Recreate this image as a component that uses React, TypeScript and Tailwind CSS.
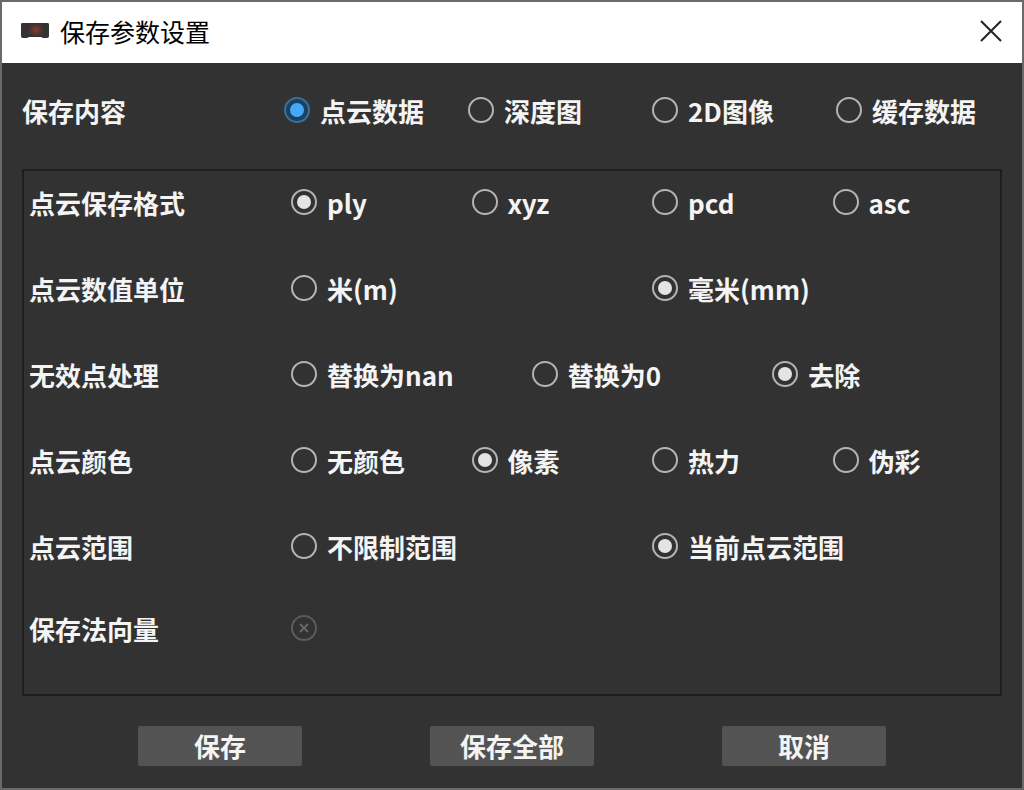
import { useState } from "react";

type Option = { label: string; accent?: boolean };

type Setting = { name: string; title: string; options: string[]; initial: number; columns: string };

const contents: string[] = ["点云数据", "深度图", "2D图像", "缓存数据"];

const settings: Setting[] = [
  { name: "format", title: "点云保存格式", options: ["ply", "xyz", "pcd", "asc"], initial: 0, columns: "grid-cols-4" },
  { name: "unit", title: "点云数值单位", options: ["米(m)", "毫米(mm)"], initial: 1, columns: "grid-cols-2" },
  { name: "invalid", title: "无效点处理", options: ["替换为nan", "替换为0", "去除"], initial: 2, columns: "grid-cols-3" },
  { name: "color", title: "点云颜色", options: ["无颜色", "像素", "热力", "伪彩"], initial: 1, columns: "grid-cols-4" },
  { name: "range", title: "点云范围", options: ["不限制范围", "当前点云范围"], initial: 1, columns: "grid-cols-2" },
];

function Radio({ label, accent, name, checked, onChange }: Option & { name: string; checked: boolean; onChange: () => void }) {
  const tone = accent
    ? "checked:border-[#3a7099] checked:bg-[#1a4160] checked:before:bg-[#45a9f8]"
    : "checked:before:bg-[#e4e4e4]";
  return (
    <label className="flex items-center gap-2.5 whitespace-nowrap">
      <input
        type="radio"
        name={name}
        checked={checked}
        onChange={onChange}
        className={`mb-0.5 grid size-[26px] shrink-0 appearance-none place-content-center rounded-full border-2 border-[#b4b4b4] before:size-3.5 before:rounded-full ${tone}`}
      />
      {label}
    </label>
  );
}

function SettingRow({ setting, accent }: { setting: Setting; accent?: boolean }) {
  const [selected, setSelected] = useState(setting.initial);
  return (
    <div role="radiogroup" aria-label={setting.title} className="flex items-center">
      <span className="w-[262px] shrink-0">{setting.title}</span>
      <div className={`grid grow gap-x-[18px] ${setting.columns}`}>
        {setting.options.map((label, i) => (
          <Radio
            key={label}
            name={setting.name}
            label={label}
            accent={accent}
            checked={selected === i}
            onChange={() => setSelected(i)}
          />
        ))}
      </div>
    </div>
  );
}

function DeviceIcon() {
  return (
    <svg viewBox="0 0 30 16" className="h-4 w-[30px]" aria-hidden="true">
      <defs>
        <radialGradient id="lens">
          <stop offset="0" stopColor="#8a3a2c" />
          <stop offset="1" stopColor="#8a3a2c" stopOpacity="0" />
        </radialGradient>
      </defs>
      <path d="M2 0H28Q29 0 29 2V13Q29 15 27 15H23L21 14H9L7 15H3Q1 15 1 13V2Q1 0 2 0Z" fill="#343234" />
      <ellipse cx="16" cy="7" rx="8" ry="7" fill="url(#lens)" />
    </svg>
  );
}

export default function App() {
  return (
    <div className="flex min-h-screen flex-col border-2 border-[#6a6a6a] bg-[#323232] font-['Noto_Sans_CJK_SC',sans-serif] text-[26px] leading-10 font-bold text-[#f4f4f4]">
      <header className="flex h-[61px] shrink-0 items-center bg-white pr-5 pb-1 pl-[18px] text-black">
        <DeviceIcon />
        <h1 className="ml-2.5 text-[25px] font-normal">保存参数设置</h1>
        <button type="button" aria-label="关闭" className="ml-auto">
          <svg viewBox="0 0 22 22" className="size-[22px]" fill="none" stroke="#222" strokeWidth="2">
            <path d="M1 1 21 21M21 1 1 21" />
          </svg>
        </button>
      </header>

      <main className="flex grow flex-col px-5 pt-7 pb-[22px]">
        <SettingRow
          accent
          setting={{ name: "content", title: "保存内容", options: contents, initial: 0, columns: "grid-cols-4" }}
        />

        <section className="mt-[38px] flex grow flex-col gap-[46px] border-2 border-[#1e1e1e] px-[5px] pt-3 pb-11">
          {settings.map((s) => (
            <SettingRow key={s.name} setting={s} />
          ))}
          <div className="-mt-1 flex items-center">
            <label htmlFor="normals" className="w-[262px] shrink-0">
              保存法向量
            </label>
            <span className="mb-0.5 grid place-items-center">
              <input
                id="normals"
                type="checkbox"
                disabled
                className="col-start-1 row-start-1 size-[26px] appearance-none rounded-full border-2 border-[#5c5c5c]"
              />
              <svg viewBox="0 0 10 10" className="pointer-events-none col-start-1 row-start-1 size-2.5" stroke="#666" strokeWidth="2" aria-hidden="true">
                <path d="M1 1 9 9M9 1 1 9" />
              </svg>
            </span>
          </div>
        </section>

        <footer className="mt-[30px] flex justify-center gap-32">
          {["保存", "保存全部", "取消"].map((label) => (
            <button key={label} type="button" className="flex h-10 w-[164px] items-center justify-center rounded-xs bg-[#535353]">
              {label}
            </button>
          ))}
        </footer>
      </main>
    </div>
  );
}
